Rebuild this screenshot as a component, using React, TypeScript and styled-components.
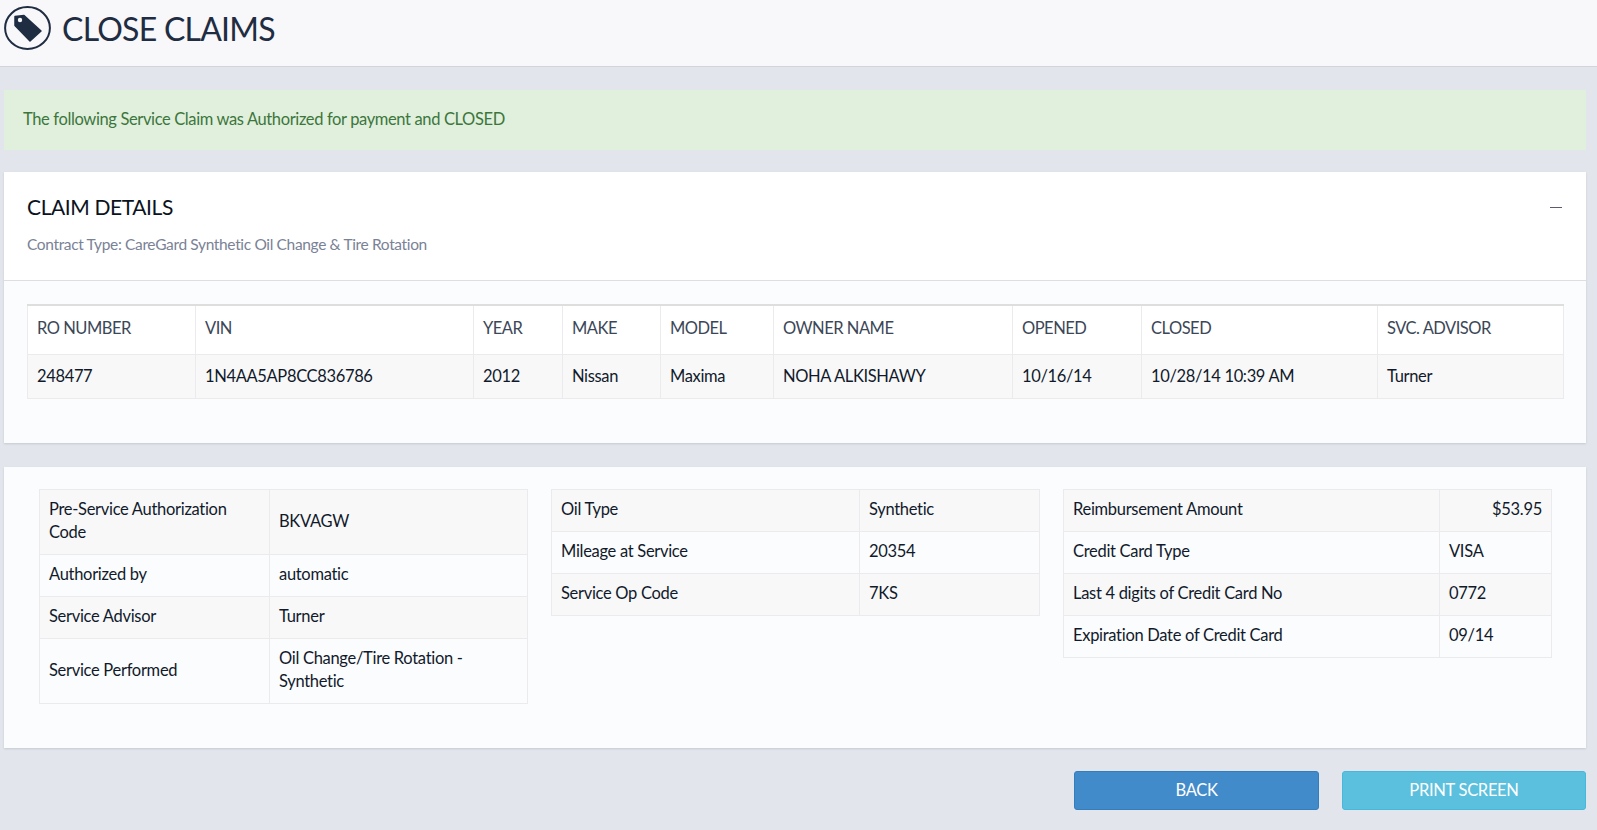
import React from "react"
import styled, { createGlobalStyle } from "styled-components"

const GlobalStyle = createGlobalStyle`
  html, body {
    margin: 0;
    padding: 0;
    height: 100%;
    overflow: hidden;
    background: #e3e5ed;
  }
  body {
    font-family: Lato, "Open Sans", sans-serif;
    font-size: 16px;
    color: #111a2b;
  }
  * { box-sizing: border-box; }
`

const Page = styled.div`
  width: 1597px;
  height: 830px;
  display: flex;
  flex-direction: column;
`

const Header = styled.header`
  height: 67px;
  flex: none;
  display: flex;
  align-items: center;
  gap: 11px;
  padding: 0 0 10px 4px;
  background: #f8f7f9;
  border-bottom: 1px solid #d2d4d9;
`

const Title = styled.h1`
  margin: 0;
  font-size: 32px;
  font-weight: 400;
  letter-spacing: -0.75px;
  color: #1f2d42;
`

const Alert = styled.div`
  height: 60px;
  flex: none;
  margin: 23px 11px 22px 4px;
  padding: 0 0 2px 19px;
  display: flex;
  align-items: center;
  background: #e1f0dc;
  color: #3c763d;
  font-size: 16.5px;
  letter-spacing: -0.37px;
`

const Card = styled.section<{ $height: number; $top?: number }>`
  height: ${({ $height }) => $height}px;
  flex: none;
  margin: ${({ $top }) => $top ?? 0}px 11px 0 4px;
  display: flex;
  flex-direction: column;
  background: #fbfcfd;
  box-shadow: 0 1px 2px rgba(0, 0, 0, 0.12);
`

const CardHead = styled.div`
  height: 109px;
  flex: none;
  position: relative;
  padding: 21px 23px 0;
  background: #fff;
  border-bottom: 1px solid #dddde2;
`

const CardTitle = styled.h2`
  margin: 0;
  font-size: 21px;
  line-height: 28px;
  font-weight: 400;
  letter-spacing: -0.4px;
  color: #0b1220;
`

const CardSub = styled.p`
  margin: 12px 0 0;
  font-size: 15.5px;
  line-height: 22px;
  letter-spacing: -0.35px;
  color: #7a8296;
`

const Collapse = styled.span`
  position: absolute;
  top: 35px;
  right: 24px;
  width: 12px;
  height: 1px;
  background: #5d5a70;
`

const CardBody = styled.div`
  padding: 23px 22px 0 23px;
`

const ClaimTable = styled.table`
  width: 1536px;
  table-layout: fixed;
  border-collapse: collapse;
  border-top: 2px solid #dcdfdc;
`

const Th = styled.th<{ $w: number }>`
  width: ${({ $w }) => $w}px;
  height: 49px;
  padding: 0 9px 3px;
  text-align: left;
  font-weight: 400;
  font-size: 16.5px;
  letter-spacing: -0.5px;
  color: #3b4757;
  background: #fff;
  border: 1px solid #ebebed;
  border-top: none;
`

const Td = styled.td`
  height: 44px;
  padding: 0 9px;
  font-size: 16.5px;
  letter-spacing: -0.35px;
  background: #f8f8f9;
  border: 1px solid #ebebed;
`

const DetailBody = styled.div`
  display: grid;
  grid-template-columns: repeat(3, 489px);
  gap: 23px;
  align-items: start;
  padding: 22px 0 0 35px;
`

const InfoTable = styled.table`
  width: 100%;
  table-layout: fixed;
  border-collapse: collapse;
`

const InfoRow = styled.tr`
  &:nth-child(odd) td { background: #f8f8f9; }
`

const InfoCell = styled.td<{ $w?: number; $right?: boolean }>`
  ${({ $w }) => ($w ? `width: ${$w}px;` : "")}
  text-align: ${({ $right }) => ($right ? "right" : "left")};
  padding: 8px 9px 10px;
  line-height: 23px;
  font-size: 16.5px;
  letter-spacing: -0.3px;
  border: 1px solid #ebebed;
`

const Actions = styled.div`
  display: flex;
  justify-content: flex-end;
  gap: 23px;
  margin: 23px 11px 0 0;
`

const Btn = styled.button<{ $info?: boolean }>`
  width: ${({ $info }) => ($info ? 244 : 245)}px;
  height: 39px;
  padding: 0 0 2px;
  border-radius: 3px;
  border: 1px solid ${({ $info }) => ($info ? "#46b8da" : "#357ebd")};
  background: ${({ $info }) => ($info ? "#5bc0de" : "#428bca")};
  color: #fff;
  font-family: inherit;
  font-size: 16.5px;
  letter-spacing: -0.3px;
`

const TagBadge = () => (
  <svg width="47" height="44" viewBox="0 0 47 44">
    <ellipse cx="23.5" cy="22" rx="22.4" ry="21" fill="none" stroke="#1f2d42" strokeWidth="2" />
    <path
      d="M11 10.5 L20 9.5 L37 25 L26 35 L11 19.5 Z"
      fill="#1f2d42"
      stroke="#1f2d42"
      strokeWidth="1.5"
      strokeLinejoin="round"
    />
    <circle cx="16" cy="14" r="2.2" fill="#f8f7f9" />
  </svg>
)

const claimCols = [
  ["RO NUMBER", 168, "248477"],
  ["VIN", 278, "1N4AA5AP8CC836786"],
  ["YEAR", 89, "2012"],
  ["MAKE", 98, "Nissan"],
  ["MODEL", 113, "Maxima"],
  ["OWNER NAME", 239, "NOHA ALKISHAWY"],
  ["OPENED", 129, "10/16/14"],
  ["CLOSED", 236, "10/28/14 10:39 AM"],
  ["SVC. ADVISOR", 186, "Turner"],
] as const

type Info = { rows: string[][]; w: number }

const infoTables: Info[] = [
  {
    w: 230,
    rows: [
      ["Pre-Service Authorization Code", "BKVAGW"],
      ["Authorized by", "automatic"],
      ["Service Advisor", "Turner"],
      ["Service Performed", "Oil Change/Tire Rotation - Synthetic"],
    ],
  },
  {
    w: 308,
    rows: [
      ["Oil Type", "Synthetic"],
      ["Mileage at Service", "20354"],
      ["Service Op Code", "7KS"],
    ],
  },
  {
    w: 376,
    rows: [
      ["Reimbursement Amount", "$53.95"],
      ["Credit Card Type", "VISA"],
      ["Last 4 digits of Credit Card No", "0772"],
      ["Expiration Date of Credit Card", "09/14"],
    ],
  },
]

const App: React.FC = () => {
  return (
    <Page>
      <GlobalStyle />
      <Header>
        <TagBadge />
        <Title>CLOSE CLAIMS</Title>
      </Header>

      <Alert>The following Service Claim was Authorized for payment and CLOSED</Alert>

      <Card $height={271}>
        <CardHead>
          <CardTitle>CLAIM DETAILS</CardTitle>
          <CardSub>Contract Type: CareGard Synthetic Oil Change &amp; Tire Rotation</CardSub>
          <Collapse />
        </CardHead>
        <CardBody>
          <ClaimTable>
            <thead>
              <tr>
                {claimCols.map(([label, w]) => (
                  <Th key={label} $w={w}>{label}</Th>
                ))}
              </tr>
            </thead>
            <tbody>
              <tr>
                {claimCols.map(([label, , value]) => (
                  <Td key={label}>{value}</Td>
                ))}
              </tr>
            </tbody>
          </ClaimTable>
        </CardBody>
      </Card>

      <Card $height={281} $top={24}>
        <DetailBody>
          {infoTables.map((t, i) => (
            <InfoTable key={i}>
              <tbody>
                {t.rows.map(([k, v], j) => (
                  <InfoRow key={k}>
                    <InfoCell $w={t.w}>{k}</InfoCell>
                    <InfoCell $right={i === 2 && j === 0}>{v}</InfoCell>
                  </InfoRow>
                ))}
              </tbody>
            </InfoTable>
          ))}
        </DetailBody>
      </Card>

      <Actions>
        <Btn>BACK</Btn>
        <Btn $info>PRINT SCREEN</Btn>
      </Actions>
    </Page>
  )
}

export default App
